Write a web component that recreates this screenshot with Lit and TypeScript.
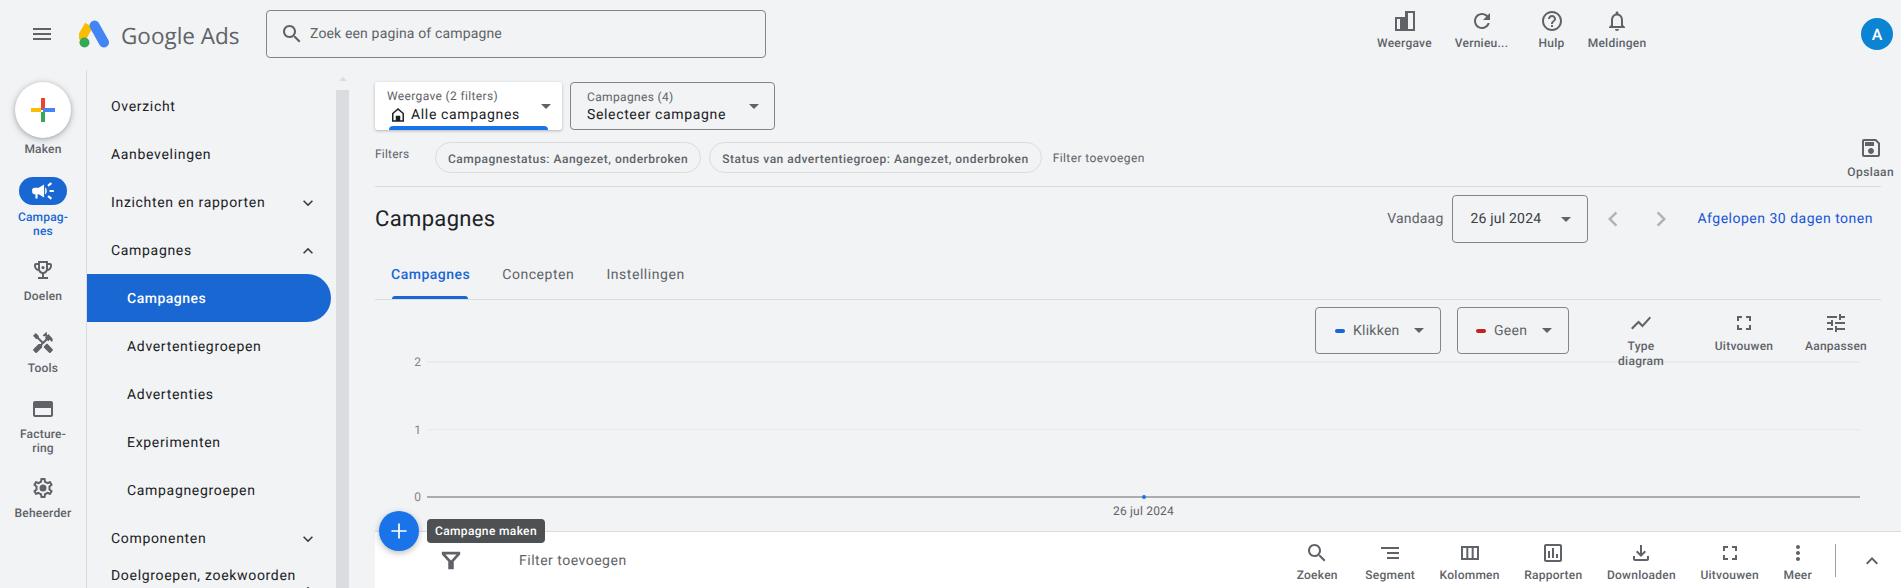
import { LitElement, html, css, svg } from "lit";
import { customElement } from "lit/decorators.js";

const P: Record<string, string> = {
  menu: "M3 18h18v-2H3v2zm0-5h18v-2H3v2zm0-7v2h18V6H3z",
  search: "M15.5 14h-.79l-.28-.27C15.41 12.59 16 11.11 16 9.5 16 5.91 13.09 3 9.5 3S3 5.91 3 9.5 5.91 16 9.5 16c1.61 0 3.09-.59 4.23-1.57l.27.28v.79l5 4.99L20.49 19l-4.99-5zm-6 0C7.01 14 5 11.99 5 9.5S7.01 5 9.5 5 14 7.01 14 9.5 11.99 14 9.5 14z",
  refresh: "M17.65 6.35C16.2 4.9 14.21 4 12 4c-4.42 0-7.99 3.58-7.99 8s3.57 8 7.99 8c3.73 0 6.84-2.55 7.73-6h-2.08c-.82 2.33-3.04 4-5.65 4-3.31 0-6-2.69-6-6s2.69-6 6-6c1.66 0 3.14.69 4.22 1.78L13 11h7V4l-2.35 2.35z",
  help: "M11 18h2v-2h-2v2zm1-16C6.48 2 2 6.48 2 12s4.48 10 10 10 10-4.48 10-10S17.52 2 12 2zm0 18c-4.41 0-8-3.59-8-8s3.59-8 8-8 8 3.59 8 8-3.59 8-8 8zm0-14c-2.21 0-4 1.79-4 4h2c0-1.1.9-2 2-2s2 .9 2 2c0 2-3 1.75-3 5h2c0-2.25 3-2.5 3-5 0-2.21-1.79-4-4-4z",
  bell: "M12 22c1.1 0 2-.9 2-2h-4c0 1.1.9 2 2 2zm6-6v-5c0-3.07-1.63-5.64-4.5-6.32V4c0-.83-.67-1.5-1.5-1.5s-1.5.67-1.5 1.5v.68C7.64 5.36 6 7.92 6 11v5l-2 2v1h16v-1l-2-2zm-2 1H8v-6c0-2.48 1.51-4.5 4-4.5s4 2.02 4 4.5v6z",
  view: "M12 2h10v20H2V8h10V2zm3 2v16h5V4h-5zM4 10v10h3V10H4z",
  full: "M7 14H5v5h5v-2H7v-3zm-2-4h2V7h3V5H5v5zm12 7h-3v2h5v-5h-2v3zM14 5v2h3v3h2V5h-5z",
  tune: "M3 17v2h6v-2H3zM3 5v2h10V5H3zm10 16v-2h8v-2h-8v-2h-2v6h2zM7 9v2H3v2h4v2h2V9H7zm14 4v-2H11v2h10zm-6-4h2V7h4V5h-4V3h-2v6z",
  chart: "M3.5 18.49l6-6.01 4 4L22 6.92l-1.41-1.41-7.09 7.97-4-4L2 16.99z",
  save: "M17 3H5c-1.11 0-2 .9-2 2v14c0 1.1.89 2 2 2h14c1.1 0 2-.9 2-2V7l-4-4zm2 16H5V5h11.17L19 7.83V19zm-7-7c-1.66 0-3 1.34-3 3s1.34 3 3 3 3-1.34 3-3-1.34-3-3-3zM6 6h9v4H6z",
  campaign: "M18 11v2h4v-2h-4zm-2 6.61c.96.71 2.21 1.65 3.2 2.39.4-.53.8-1.07 1.2-1.6-.99-.74-2.24-1.68-3.2-2.4-.4.54-.8 1.08-1.2 1.61zM20.4 5.6c-.4-.53-.8-1.07-1.2-1.6-.99.74-2.24 1.68-3.2 2.4.4.53.8 1.07 1.2 1.6.96-.72 2.21-1.65 3.2-2.4zM4 9c-1.1 0-2 .9-2 2v2c0 1.1.9 2 2 2h1v4h2v-4h1l5 3V6L8 9H4zm11.5 3c0-1.33-.58-2.53-1.5-3.35v6.69c.92-.81 1.5-2.01 1.5-3.34z",
  trophy: "M19 5h-2V3H7v2H5c-1.1 0-2 .9-2 2v1c0 2.55 1.92 4.63 4.39 4.94.63 1.5 1.98 2.63 3.61 2.96V19H7v2h10v-2h-4v-3.1c1.63-.33 2.98-1.46 3.61-2.96C19.08 12.63 21 10.55 21 8V7c0-1.1-.9-2-2-2zM5 8V7h2v3.82C5.84 10.4 5 9.3 5 8zm7 6c-1.65 0-3-1.35-3-3V5h6v6c0 1.65-1.35 3-3 3zm7-6c0 1.3-.84 2.4-2 2.82V7h2v1zM12 8a1.6 1.6 0 1 0 0 3.2A1.6 1.6 0 0 0 12 8z",
  tools: "M21.67 18.17l-5.3-5.3h-.99l-2.54 2.54v.99l5.3 5.3c.39.39 1.02.39 1.41 0l2.12-2.12c.39-.38.39-1.02 0-1.41zM17.34 10.19l1.41-1.41 2.12 2.12c1.17-1.17 1.17-3.07 0-4.24l-3.54-3.54-1.41 1.41V1.71l-.7-.71-3.54 3.54.71.71h2.83l-1.41 1.41 1.06 1.06-2.89 2.89-4.13-4.13V5.06L4.83 2.04 2 4.87 5.03 7.9h1.41l4.13 4.13-.85.85H7.6l-5.3 5.3c-.39.39-.39 1.02 0 1.41l2.12 2.12c.39.39 1.02.39 1.41 0l5.3-5.3v-2.12l5.15-5.15 1.06 1.05z",
  card: "M20 4H4c-1.11 0-1.99.89-1.99 2L2 18c0 1.11.89 2 2 2h16c1.11 0 2-.89 2-2V6c0-1.11-.89-2-2-2zm0 14H4v-7h16v7z",
  gear: "M19.43 12.98c.04-.32.07-.64.07-.98 0-.34-.03-.66-.07-.98l2.11-1.65c.19-.15.24-.42.12-.64l-2-3.46c-.09-.16-.26-.25-.44-.25-.06 0-.12.01-.17.03l-2.49 1c-.52-.4-1.08-.73-1.69-.98l-.38-2.65C14.46 2.18 14.25 2 14 2h-4c-.25 0-.46.18-.49.42l-.38 2.65c-.61.25-1.17.59-1.69.98l-2.49-1c-.06-.02-.12-.03-.18-.03-.17 0-.34.09-.43.25l-2 3.46c-.13.22-.07.49.12.64l2.11 1.65c-.04.32-.07.65-.07.98 0 .33.03.66.07.98l-2.11 1.65c-.19.15-.24.42-.12.64l2 3.46c.09.16.26.25.44.25.06 0 .12-.01.17-.03l2.49-1c.52.4 1.08.73 1.69.98l.38 2.65c.03.24.24.42.49.42h4c.25 0 .46-.18.49-.42l.38-2.65c.61-.25 1.17-.59 1.69-.98l2.49 1c.06.02.12.03.18.03.17 0 .34-.09.43-.25l2-3.46c.12-.22.07-.49-.12-.64l-2.11-1.65zm-1.98-1.71c.04.31.05.52.05.73 0 .21-.02.43-.05.73l-.14 1.13.89.7 1.08.84-.7 1.21-1.27-.51-1.04-.42-.9.68c-.43.32-.84.56-1.25.73l-1.06.43-.16 1.13-.2 1.35h-1.4l-.19-1.35-.16-1.13-1.06-.43c-.43-.18-.83-.41-1.23-.71l-.91-.7-1.06.43-1.27.51-.7-1.21 1.08-.84.89-.7-.14-1.13c-.03-.31-.05-.54-.05-.74s.02-.43.05-.73l.14-1.13-.89-.7-1.08-.84.7-1.21 1.27.51 1.04.42.9-.68c.43-.32.84-.56 1.25-.73l1.06-.43.16-1.13.2-1.35h1.39l.19 1.35.16 1.13 1.06.43c.43.18.83.41 1.23.71l.91.7 1.06-.43 1.27-.51.7 1.21-1.07.85-.89.7.14 1.13zM12 8.5a3.5 3.5 0 1 0 0 7 3.5 3.5 0 0 0 0-7z",
  segment: "M9 18h12v-2H9v2zM3 6v2h18V6H3zm6 7h12v-2H9v2z",
  columns: "M3 5v14h18V5H3zm5.33 12H5V7h3.33v10zm5.34 0h-3.34V7h3.34v10zM19 17h-3.33V7H19v10z",
  report: "M19 3H5c-1.1 0-2 .9-2 2v14c0 1.1.9 2 2 2h14c1.1 0 2-.9 2-2V5c0-1.1-.9-2-2-2zm0 16H5V5h14v14zM7 10h2v7H7zm4-3h2v10h-2zm4 6h2v4h-2z",
  download: "M18 15v3H6v-3H4v3c0 1.1.9 2 2 2h12c1.1 0 2-.9 2-2v-3h-2zm-1-4l-1.41-1.41L13 12.17V4h-2v8.17L8.41 9.59 7 11l5 5 5-5z",
  more: "M12 8c1.1 0 2-.9 2-2s-.9-2-2-2-2 .9-2 2 .9 2 2 2zm0 2c-1.1 0-2 .9-2 2s.9 2 2 2 2-.9 2-2-.9-2-2-2zm0 6c-1.1 0-2 .9-2 2s.9 2 2 2 2-.9 2-2-.9-2-2-2z",
  down: "M7.41 8.59L12 13.17l4.59-4.58L18 10l-6 6-6-6z",
  up: "M12 8l-6 6 1.41 1.41L12 10.83l4.59 4.58L18 14z",
  prev: "M15.41 7.41L14 6l-6 6 6 6 1.41-1.41L10.83 12z",
  next: "M10 6L8.59 7.41 13.17 12l-4.58 4.59L10 18l6-6z",
  home: "M12 2.5L4 9.5V21h16V9.5l-8-7zm6 16.5h-3v-6H9v6H6v-8.6l6-5.2 6 5.2V19z",
  funnel: "M2 3h20v3l-7 7.5V22H9v-8.5L2 6V3zm4 3l6 6.5L18 6H6z",
  plus: "M19 12.8h-6.2V19h-1.6v-6.2H5v-1.6h6.2V5h1.6v6.2H19v1.6z",
};

const icon = (name: string, size = 24, color = "currentColor") => html`<svg
  width=${size} height=${size} viewBox="0 0 24 24" fill=${color} aria-hidden="true">
  ${svg`<path fill-rule="evenodd" d=${P[name]}></path>`}
</svg>`;

const caret = html`<span class="caret"></span>`;

@customElement("app-root")
export class AppRoot extends LitElement {
  static styles = css`
    :host {
      display: block;
      width: 1901px;
      height: 588px;
      overflow: hidden;
      background: #f1f3f5;
      font-family: Roboto, "Liberation Sans", sans-serif;
      color: #5f6368;
      position: relative;
      text-rendering: geometricPrecision;
    }
    svg { display: block; flex: none; }
    .caret {
      display: block;
      width: 0;
      height: 0;
      border-left: 5px solid transparent;
      border-right: 5px solid transparent;
      border-top: 5px solid #5f6368;
      flex: none;
    }

    /* top bar */
    header { display: flex; align-items: center; height: 70px; padding-bottom: 2px; box-sizing: border-box; }
    .burger { width: 24px; margin-left: 30px; color: #5f6368; }
    .logo { margin-left: 25px; }
    .brand {
      margin: 2px 0 0 12px;
      font: 400 22.5px "Open Sans", sans-serif;
      letter-spacing: 0;
      color: #5f6368;
      width: 145px;
      white-space: nowrap;
    }
    .search {
      width: 500px;
      height: 48px;
      box-sizing: border-box;
      border: 1px solid #80868b;
      border-radius: 4px;
      display: flex;
      align-items: center;
      padding-left: 13px;
      gap: 6px;
      font-size: 14px;
      letter-spacing: 0.15px;
      color: #5f6368;
    }
    .head-actions { display: flex; margin-left: 600px; margin-top: -9px; }
    .tool {
      display: flex;
      flex-direction: column;
      align-items: center;
      font-size: 12px;
      font-weight: 500;
      letter-spacing: 0.25px;
      line-height: 14px;
      color: #5f6368;
      text-align: center;
      white-space: nowrap;
    }
    .head-actions .tool { gap: 3px; width: 77px; }
    .head-actions .tool:nth-child(3) { width: 63px; }
    .head-actions .tool:nth-child(4) { width: 68px; }
    .avatar {
      width: 32px;
      height: 32px;
      border-radius: 50%;
      background: #0b84d4;
      color: #fff;
      font-size: 16px;
      font-weight: 500;
      display: flex;
      align-items: center;
      justify-content: center;
      margin-left: 210px;
    }

    /* body columns */
    .body { display: flex; height: 518px; }
    .rail {
      width: 86px;
      flex: none;
      border-right: 1px solid #dadce0;
      display: flex;
      flex-direction: column;
      align-items: center;
      padding-top: 12px;
      box-sizing: content-box;
    }
    .make {
      width: 56px;
      height: 56px;
      border-radius: 50%;
      background: #fff;
      box-shadow: 0 1px 4px rgba(60, 64, 67, 0.3), 0 2px 8px rgba(60, 64, 67, 0.2);
      display: flex;
      align-items: center;
      justify-content: center;
      margin-left: -1px;
    }
    .rail-item {
      display: flex;
      flex-direction: column;
      align-items: center;
      font-size: 12px;
      font-weight: 500;
      letter-spacing: 0.2px;
      line-height: 14px;
      color: #5f6368;
      text-align: center;
      width: 86px;
    }
    .rail-item .ico { height: 28px; display: flex; align-items: center; justify-content: center; margin-bottom: 4px; }
    .rail-item.first { margin-top: 4px; }
    .rail-item.on { color: #1967d2; margin-top: 21px; }
    .rail-item.on .ico { width: 48px; background: #1967d2; border-radius: 14px; color: #fff; margin-bottom: 5px; }
    .rail-item.r1 { margin-top: 18px; }
    .rail-item.r1 .ico { margin-bottom: 5px; }
    .rail-item.r2 { margin-top: 26px; }
    .rail-item.r3 { margin-top: 20px; }
    .rail-item.r4 { margin-top: 19px; }

    .nav { width: 249px; flex: none; padding-top: 12px; color: #202124; font-size: 14px; letter-spacing: 0.68px; }
    .nav-item {
      height: 48px;
      display: flex;
      align-items: center;
      padding: 1px 13px 0 24px;
      width: 244px;
      box-sizing: border-box;
      white-space: nowrap;
      justify-content: space-between;
    }
    .nav-item.sub { padding-left: 40px; }
    .nav-item.active {
      background: #1967d2;
      color: #fff;
      border-radius: 0 24px 24px 0;
      font-weight: 500;
      letter-spacing: 0.5px;
    }
    .nav-item svg { color: #3c4043; }
    .nav-two { height: 30px; align-items: flex-start; padding-top: 6px; position: relative; }
    .nav-two svg { position: absolute; right: 13px; top: 18px; }

    .scroll { width: 13px; flex: none; display: flex; flex-direction: column; align-items: center; }
    .scroll .arrow {
      width: 0; height: 0; margin: 7px 0 9px;
      border-left: 4px solid transparent;
      border-right: 4px solid transparent;
      border-bottom: 4px solid #dadce0;
    }
    .scroll .thumb { width: 13px; flex: 1; background: #dadce0; }

    main {
      flex: 1;
      min-width: 0;
      padding: 12px 20px 0 26px;
      position: relative;
      display: flex;
      flex-direction: column;
    }
    .selectors { display: flex; gap: 8px; height: 48px; flex: none; }
    .view {
      width: 187px;
      box-sizing: border-box;
      background: #fff;
      border-radius: 3px;
      box-shadow: 0 1px 3px rgba(60, 64, 67, 0.35);
      padding: 7px 0 0 12px;
      position: relative;
      font-size: 12px;
      letter-spacing: 0.35px;
      line-height: 14px;
    }
    .view .val {
      display: flex;
      align-items: center;
      gap: 4px;
      font-size: 14px;
      letter-spacing: 0.65px;
      color: #202124;
      margin-top: 3px;
      line-height: 18px;
      margin-left: 2px;
    }
    .view .bar {
      position: absolute;
      left: 14px;
      width: 159px;
      bottom: 0;
      height: 4px;
      border-radius: 4px 4px 0 0;
      background: #1a73e8;
    }
    .view .caret { position: absolute; right: 11px; top: 22px; }
    .pick {
      width: 205px;
      box-sizing: border-box;
      border: 1px solid #80868b;
      border-radius: 4px;
      padding: 7px 0 0 16px;
      position: relative;
      font-size: 12px;
      letter-spacing: 0.35px;
      line-height: 14px;
    }
    .pick .val { font-size: 14px; letter-spacing: 0.65px; color: #202124; line-height: 18px; margin-top: 2px; }
    .pick .caret { position: absolute; right: 15px; top: 21px; }

    .filters {
      height: 57px;
      flex: none;
      box-sizing: border-box;
      border-bottom: 1px solid #dadce0;
      display: flex;
      align-items: flex-start;
      padding-top: 12px;
      font-size: 12px;
      letter-spacing: 0.2px;
    }
    .filters .lbl { width: 60px; line-height: 24px; }
    .chip {
      height: 31px;
      box-sizing: border-box;
      border: 1px solid #dadce0;
      border-radius: 16px;
      display: flex;
      align-items: center;
      padding: 2px 12px 0;
      font-weight: 500;
      letter-spacing: 0.5px;
      margin-right: 8px;
      white-space: nowrap;
      line-height: 16px;
    }
    .add { margin: 9px 0 0 3px; line-height: 14px; white-space: nowrap; letter-spacing: 0.42px; }
    .filters .tool { margin-left: auto; margin-top: -6px; margin-right: -13px; gap: 5px; font-weight: 500; letter-spacing: .4px; }

    .title-row { height: 64px; flex: none; display: flex; align-items: center; box-sizing: border-box; }
    h1 { font-size: 22px; font-weight: 400; color: #202124; margin: 0; letter-spacing: 0.35px; }
    .date-wrap { margin-left: auto; display: flex; align-items: center; font-size: 14px; letter-spacing: 0.2px; }
    .date {
      width: 136px;
      height: 48px;
      box-sizing: border-box;
      border: 1px solid #80868b;
      border-radius: 4px;
      margin-left: 9px;
      display: flex;
      align-items: center;
      justify-content: space-between;
      padding: 0 16px 0 17px;
      color: #3c4043;
    }
    .nav-arrows { display: flex; gap: 18px; color: #b0b4b8; margin: 0 21px 0 10px; }
    .link { color: #1a56d6; letter-spacing: 0.5px; white-space: nowrap; margin-right: 8px; }

    .tabs {
      height: 49px;
      flex: none;
      box-sizing: border-box;
      border-bottom: 1px solid #dadce0;
      display: flex;
      padding-left: 16px;
      gap: 32px;
      font-size: 14px;
      letter-spacing: 0.55px;
    }
    .tab { height: 48px; display: flex; align-items: center; position: relative; }
    .tab.on { color: #1967d2; letter-spacing: 0.5px; font-weight: 500; }
    .tab.on::after {
      content: "";
      position: absolute;
      left: 1px;
      right: 2px;
      bottom: 0;
      height: 3px;
      background: #1967d2;
      border-radius: 3px 3px 0 0;
    }

    .controls { height: 61px; flex: none; display: flex; padding-top: 7px; box-sizing: border-box; position: relative; z-index: 1; }
    .metric {
      height: 47px;
      box-sizing: border-box;
      border: 1px solid #80868b;
      border-radius: 4px;
      display: flex;
      align-items: center;
      font-size: 14px;
      letter-spacing: 0.25px;
      padding: 0 16px 0 19px;
    }
    .metric .dash { width: 10px; height: 4px; border-radius: 2px; margin-right: 8px; }
    .metric .caret { margin-left: auto; }
    .metric.m1 { margin-left: 940px; width: 126px; }
    .metric.m2 { margin-left: 16px; width: 112px; padding-left: 18px; }
    .ctools { display: flex; }
    .ctools .tool { width: 60px; gap: 4px; padding-top: 4px; white-space: normal; line-height: 14.5px; }
    .ctools .tool:nth-child(1) { margin-left: 42px; }
    .ctools .tool:nth-child(2) { margin-left: 43px; }
    .ctools .tool:nth-child(3) { margin-left: 32px; }

    .chart { flex: none; display: flex; flex-direction: column; gap: 65.5px; position: relative; width: 1485px; }
    .gr { height: 2px; display: flex; align-items: center; font-size: 12px; color: #80868b; }
    .gr span { width: 52px; text-align: right; padding-right: 6px; box-sizing: border-box; line-height: 14px; padding-left: 37px; }
    .gr i { flex: 1; height: 2px; background: #e8eaed; display: block; }
    .gr.one i { height: 1px; }
    .gr.zero i { background: #aaacae; }
    .dot {
      position: absolute;
      left: 767px;
      bottom: -1px;
      width: 4px;
      height: 4px;
      border-radius: 50%;
      background: #1a73e8;
    }
    .xlab { flex: none; width: 1485px; padding-left: 52px; box-sizing: border-box; text-align: center; font-size: 12px; letter-spacing: 0.2px; color: #5f6368; line-height: 14px; margin-top: 5.5px; }

    .table {
      background: #fff;
      border-top: 1px solid #dadce0;
      margin: 13px -20px 0 0;
      flex: 1;
      display: flex;
      align-items: flex-start;
      position: relative;
    }
    .funnel { margin: 17px 0 0 65px; color: #5f6368; }
    .tfilter { margin: 21px 0 0 57px; font-size: 14px; letter-spacing: 0.5px; line-height: 16px; white-space: nowrap; }
    .ttools { display: flex; margin-left: auto; gap: 24.5px; padding-top: 9px; }
    .ttools .tool { gap: 3px; }
    .ttools .tool:first-child { margin-right: 3px; }
    .vr { width: 1px; height: 33px; background: #9aa0a6; margin: 12px 0 0 23px; }
    .collapse { margin: 17px 17px 0 24px; color: #5f6368; }
    .fab {
      position: absolute;
      left: 4px;
      top: -21px;
      width: 40px;
      height: 40px;
      border-radius: 50%;
      background: #1a73e8;
      color: #fff;
      display: flex;
      align-items: center;
      justify-content: center;
      box-shadow: 0 2px 6px rgba(60, 64, 67, 0.35);
    }
    .tip {
      position: absolute;
      left: 52px;
      top: -13px;
      height: 24px;
      padding: 0 8px;
      display: flex;
      align-items: center;
      background: #4e5154;
      color: #fff;
      border-radius: 4px;
      font-size: 12px;
      letter-spacing: 0.35px;
      font-weight: 500;
      white-space: nowrap;
    }
  `;

  private tool(name: string, label: string) {
    return html`<div class="tool">${icon(name)}<span>${label}</span></div>`;
  }

  render() {
    return html`
      <header>
        <div class="burger">${icon("menu")}</div>
        <svg class="logo" width="30" height="28" viewBox="0 0 30 28" aria-hidden="true">
          <path d="M1.5 20 L10 5" stroke="#fbbc04" stroke-width="9" fill="none"></path>
          <path d="M15.5 5.5 L25 22.5" stroke="#4285f4" stroke-width="10" stroke-linecap="round" fill="none"></path>
          <circle cx="5.5" cy="22.5" r="5" fill="#34a853"></circle>
        </svg>
        <div class="brand">Google Ads</div>
        <div class="search">${icon("search", 24)}<span>Zoek een pagina of campagne</span></div>
        <div class="head-actions">
          ${this.tool("view", "Weergave")}
          ${this.tool("refresh", "Vernieu...")}
          ${this.tool("help", "Hulp")}
          ${this.tool("bell", "Meldingen")}
        </div>
        <div class="avatar">A</div>
      </header>
      <div class="body">
        <aside class="rail">
          <div class="make">
            <svg width="24" height="24" viewBox="0 0 24 24" aria-hidden="true">
              <rect x="0" y="10" width="10" height="4" fill="#fbbc04"></rect>
              <rect x="10" y="0" width="4" height="12" fill="#ea4335"></rect>
              <rect x="12" y="10" width="12" height="4" fill="#4285f4"></rect>
              <rect x="10" y="14" width="4" height="10" fill="#34a853"></rect>
            </svg>
          </div>
          <div class="rail-item first"><span>Maken</span></div>
          <div class="rail-item on"><div class="ico">${icon("campaign", 26)}</div><span>Campag-<br />nes</span></div>
          <div class="rail-item r1"><div class="ico">${icon("trophy")}</div><span>Doelen</span></div>
          <div class="rail-item r2"><div class="ico">${icon("tools")}</div><span>Tools</span></div>
          <div class="rail-item r3"><div class="ico">${icon("card")}</div><span>Facture-<br />ring</span></div>
          <div class="rail-item r4"><div class="ico">${icon("gear")}</div><span>Beheerder</span></div>
        </aside>
        <nav class="nav">
          <div class="nav-item">Overzicht</div>
          <div class="nav-item">Aanbevelingen</div>
          <div class="nav-item">Inzichten en rapporten ${icon("down", 20)}</div>
          <div class="nav-item">Campagnes ${icon("up", 20)}</div>
          <div class="nav-item sub active">Campagnes</div>
          <div class="nav-item sub">Advertentiegroepen</div>
          <div class="nav-item sub">Advertenties</div>
          <div class="nav-item sub">Experimenten</div>
          <div class="nav-item sub">Campagnegroepen</div>
          <div class="nav-item">Componenten ${icon("down", 20)}</div>
          <div class="nav-item nav-two">Doelgroepen, zoekwoorden ${icon("up", 20)}</div>
        </nav>
        <div class="scroll"><div class="arrow"></div><div class="thumb"></div></div>
        <main>
          <div class="selectors">
            <div class="view">
              <div>Weergave (2 filters)</div>
              <div class="val">${icon("home", 18)}<span>Alle campagnes</span></div>
              ${caret}
              <div class="bar"></div>
            </div>
            <div class="pick">
              <div>Campagnes (4)</div>
              <div class="val">Selecteer campagne</div>
              ${caret}
            </div>
          </div>
          <div class="filters">
            <div class="lbl">Filters</div>
            <div class="chip">Campagnestatus: Aangezet, onderbroken</div>
            <div class="chip">Status van advertentiegroep: Aangezet, onderbroken</div>
            <div class="add">Filter toevoegen</div>
            ${this.tool("save", "Opslaan")}
          </div>
          <div class="title-row">
            <h1>Campagnes</h1>
            <div class="date-wrap">
              <span>Vandaag</span>
              <div class="date"><span>26 jul 2024</span>${caret}</div>
              <div class="nav-arrows">${icon("prev", 30)}${icon("next", 30)}</div>
              <span class="link">Afgelopen 30 dagen tonen</span>
            </div>
          </div>
          <div class="tabs">
            <div class="tab on">Campagnes</div>
            <div class="tab">Concepten</div>
            <div class="tab">Instellingen</div>
          </div>
          <div class="controls">
            <div class="metric m1"><span class="dash" style="background:#1967d2"></span><span>Klikken</span>${caret}</div>
            <div class="metric m2"><span class="dash" style="background:#c5221f"></span><span>Geen</span>${caret}</div>
            <div class="ctools">
              ${this.tool("chart", "Type diagram")}
              ${this.tool("full", "Uitvouwen")}
              ${this.tool("tune", "Aanpassen")}
            </div>
          </div>
          <div class="chart">
            <div class="gr"><span>2</span><i></i></div>
            <div class="gr one"><span>1</span><i></i></div>
            <div class="gr zero"><span>0</span><i></i></div>
            <div class="dot"></div>
          </div>
          <div class="xlab">26 jul 2024</div>
          <div class="table">
            <div class="funnel">${icon("funnel", 22)}</div>
            <div class="tfilter">Filter toevoegen</div>
            <div class="ttools">
              ${this.tool("search", "Zoeken")}
              ${this.tool("segment", "Segment")}
              ${this.tool("columns", "Kolommen")}
              ${this.tool("report", "Rapporten")}
              ${this.tool("download", "Downloaden")}
              ${this.tool("full", "Uitvouwen")}
              ${this.tool("more", "Meer")}
            </div>
            <div class="vr"></div>
            <div class="collapse">${icon("up")}</div>
            <div class="fab">${icon("plus", 26)}</div>
            <div class="tip">Campagne maken</div>
          </div>
        </main>
      </div>
    `;
  }
}
